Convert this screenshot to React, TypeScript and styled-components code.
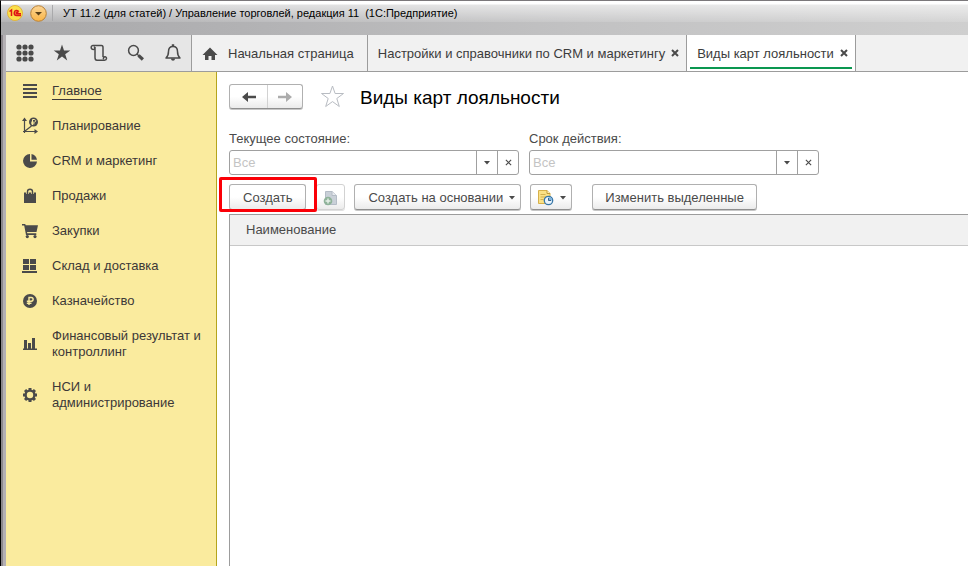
import React from "react";
import styled, { createGlobalStyle, css } from "styled-components";

const ink = "#4a4a4a";

const GlobalStyle = createGlobalStyle`
  *, *::before, *::after { box-sizing: border-box; }
  body {
    margin: 0;
    background: #fff;
    color: ${ink};
    font-family: "Liberation Sans", Arial, sans-serif;
    font-size: 13px;
    line-height: 16px;
  }
  button, input { font: inherit; color: inherit; }
  button { margin: 0; padding: 0; border: 0; background: none; }
  svg { display: block; flex: none; }
`;

const Window = styled.div`
  display: flex;
  flex-direction: column;
  min-height: 100vh;
  overflow: hidden;
`;

const TitleBar = styled.header`
  display: flex;
  align-items: flex-start;
  height: 35px;
  padding: 4px 8px 0 6px;
  border-top: 1px solid #7b787b;
  border-left: 1px solid #000;
  background:
    linear-gradient(to bottom, #fff 0, #fff 3px, rgba(255, 255, 255, 0.6) 4px, rgba(255, 255, 255, 0.12) 21px, transparent 21px),
    linear-gradient(to right, #a8a8aa, #b2b2b4 25%, #c2c2c3 60%, #cfcfcf);
`;

const TitleButton = styled.button`
  display: flex;
  & + & { margin-left: 7px; }
`;

const TitleText = styled.h1`
  margin: 0 0 0 5px;
  padding-left: 10px;
  border-left: 1px solid #a9a9ab;
  color: #000;
  font-size: 11px;
  font-weight: 400;
  white-space: pre;
`;

const Frame = styled.div`
  display: flex;
  flex-direction: column;
  flex: 1;
  border-left: 1px solid #000;
  box-shadow: inset 2px 0 0 #8c888c, inset 5px 0 0 #b4b0b4;
  padding-left: 5px;
`;

const TopRow = styled.div`
  display: flex;
  height: 37px;
  border-bottom: 1px solid #9c9c9c;
  background: #f1f1f1;
`;

const Tools = styled.div`
  display: grid;
  grid-template-columns: repeat(5, 37px);
  border-right: 1px solid #9c9c9c;
  background: #e6e6e6;
`;

const ToolButton = styled.button`
  display: flex;
  align-items: center;
  justify-content: center;
`;

const Tabs = styled.nav`
  display: flex;
  flex: 1;
  min-width: 0;
`;

const Tab = styled.div<{ $active?: boolean; $home?: boolean }>`
  display: flex;
  align-items: center;
  gap: 6px;
  padding: 0 ${(p) => (p.$home ? 13 : 7)}px 0 10px;
  border-right: 1px solid #9c9c9c;
  white-space: nowrap;
  ${(p) =>
    p.$active &&
    css`
      background: linear-gradient(#0a9750, #0a9750) 50% calc(100% - 2px) / calc(100% - 6px) 2px no-repeat #fff;
    `}
`;

const TabLink = styled.a`
  display: flex;
  align-items: center;
  gap: 10px;
  padding-top: 1px;
  color: #3c3c3c;
  text-decoration: none;
`;

const CloseButton = styled.button`
  display: flex;
`;

const Body = styled.div`
  display: flex;
  flex: 1;
`;

const Sidebar = styled.nav`
  flex: 0 0 211px;
  padding: 11px 12px 0 16px;
  border-right: 1px solid #b5a51c;
  background: #faeb9e;
`;

const Menu = styled.ul`
  display: flex;
  flex-direction: column;
  gap: 19px;
  margin: 0;
  padding: 0;
  list-style: none;
`;

const MenuLink = styled.a<{ $current?: boolean }>`
  display: flex;
  align-items: center;
  gap: 14px;
  color: #3c3838;
  text-decoration: none;
  span { box-shadow: ${(p) => (p.$current ? "0 1px 0 #3c3838" : "none")}; }
`;

const Content = styled.main`
  display: flex;
  flex-direction: column;
  flex: 1;
  min-width: 0;
  padding: 12px 0 0 12px;
`;

const Heading = styled.div`
  display: flex;
  align-items: flex-start;
  h2 {
    margin: 0 0 0 15px;
    color: #000;
    font-size: 19px;
    font-weight: 400;
    line-height: 28px;
  }
`;

const raised = css`
  border: 1px solid #b0b0b0;
  border-bottom-color: #8f8f8f;
  border-radius: 3px;
  background: linear-gradient(#fff 50%, #ebebeb);
  box-shadow: 0 1px 0 #c6c6c6;
`;

const History = styled.div`
  ${raised}
  display: grid;
  grid-template-columns: 37px 35px;
  height: 25px;
  margin-right: 17px;
`;

const HistoryButton = styled.button`
  display: flex;
  align-items: center;
  justify-content: center;
  & + & { border-left: 1px solid #d2d2d2; }
`;

const IconButton = styled.button`
  display: flex;
`;

const Filters = styled.div`
  display: flex;
  gap: 10px;
  margin-top: 19px;
`;

const Field = styled.div`
  flex: 0 1 290px;
  label { display: block; margin-bottom: 3px; }
`;

const Combo = styled.div`
  display: flex;
  height: 25px;
  border: 1px solid #a0a0a0;
  border-radius: 3px;
  background: #fff;
`;

const ComboInput = styled.input`
  flex: 1;
  min-width: 0;
  padding: 0 3px;
  border: 0;
  outline: 0;
  background: transparent;
  &::placeholder { color: #c4c4c4; opacity: 1; }
`;

const ComboButton = styled.button`
  display: flex;
  align-items: center;
  justify-content: center;
  width: 21px;
  border-left: 1px solid #a0a0a0;
`;

const Commands = styled.div`
  display: flex;
  margin-top: 9px;
`;

const Highlight = styled.div`
  position: relative;
  z-index: 1;
  margin-right: 10px;
  &::after {
    content: "";
    position: absolute;
    inset: -7px -11px -2px -10px;
    border: 3px solid #fb0007;
    border-radius: 2px;
    pointer-events: none;
  }
`;

const CommandButton = styled.button<{ $tight?: boolean; $faded?: boolean }>`
  ${raised}
  display: flex;
  align-items: center;
  gap: 6px;
  height: 26px;
  padding: 1px ${(p) => (p.$tight ? 6 : 13)}px 0;
  white-space: nowrap;
  ${(p) =>
    p.$faded &&
    css`
      border-color: #d2d2d2;
      box-shadow: 0 1px 0 #e0e0e0;
    `}
`;

const SplitButton = styled(CommandButton)`
  padding-right: 5px;
  margin-left: 9px;
  & + & { padding-left: 6px; }
`;

const LastButton = styled(CommandButton)`
  margin-left: 20px;
  padding-left: 12px;
  padding-right: 12px;
`;

const Grid = styled.div`
  flex: 1;
  margin-top: 4px;
  border-top: 1px solid #9c9c9c;
  border-left: 1px solid #9c9c9c;
`;

const Table = styled.table`
  width: 100%;
  border-collapse: separate;
  border-spacing: 0;
  th {
    height: 31px;
    padding: 0 16px;
    border-bottom: 1px solid #c8c8c8;
    background: #f1f1f1;
    font-weight: 400;
    text-align: left;
    vertical-align: middle;
  }
`;

const Caret = () => (
  <svg width="6" height="4" viewBox="0 0 6 4" fill={ink}>
    <path d="M0 0h6L3 3.5z" />
  </svg>
);

const Cross = ({ size, weight }: { size: number; weight: number }) => (
  <svg width={size} height={size} viewBox="0 0 8 8" stroke={ink} strokeWidth={weight} fill="none">
    <path d="M1 1l6 6M7 1L1 7" />
  </svg>
);

const BackArrow = () => (
  <svg width="14" height="12" viewBox="0 0 14 12" fill={ink}>
    <path d="M6 1L0 6l6 5V7.300H14V4.700H6z" />
  </svg>
);

const ForwardArrow = () => (
  <svg width="14" height="12" viewBox="0 0 14 12" fill="#acacac">
    <path d="M8 1L14 6l-6 5V7.300H0V4.700h8z" />
  </svg>
);

const Glyph = ({ children }: { children: React.ReactNode }) => (
  <svg width="20" height="20" viewBox="0 0 20 20" fill="none" aria-hidden="true">
    {children}
  </svg>
);

const GridIcon = () => (
  <Glyph>
    {[4, 10, 16].map((y) => [4, 10, 16].map((x) => <circle key={`${x}-${y}`} cx={x} cy={y} r="2.6" fill={ink} />))}
  </Glyph>
);
const StarIcon = () => (
  <Glyph>
    <path fill={ink} d="M10 1.500l2 6h6.300l-5.100 3.800 2 6.200-5.200-3.900-5.200 3.900 2-6.200L1.700 7.500H8z" />
  </Glyph>
);
const ScrollIcon = () => (
  <Glyph>
    <path
      stroke={ink}
      strokeWidth="1.5"
      d="M4.500 6.500C1.500 6.500 1.500 2.500 4 2.500h8.500c1.200 0 1.500 1 1.500 2v9.500M6 4v10.500c0 2 .8 2.800 2 2.800h7.500c2.600 0 2.600-3.500.5-3.500-1.500 0-2 1.200-1.300 2.400M4.500 6.500C6 6.500 6.300 4 4.800 4"
    />
  </Glyph>
);
const SearchIcon = () => (
  <Glyph>
    <circle cx="7.500" cy="7.500" r="4.900" stroke={ink} strokeWidth="1.5" />
    <path stroke={ink} strokeWidth="1.300" d="M11 11l2 2" />
    <path stroke={ink} strokeWidth="3.200" d="M12.500 12.300l4.400 4.200" />
  </Glyph>
);
const BellIcon = () => (
  <Glyph>
    <path stroke={ink} strokeWidth="1.500" strokeLinejoin="round" d="M3 15h14c-2-1.800-2.500-3-2.500-6.500 0-3-1.500-5-4.500-5s-4.500 2-4.500 5C5.500 12 5 13.200 3 15z" />
    <path fill={ink} d="M8.800 1.300h2.400v2.200H8.800zM8 15.500h4c0 3-4 3-4 0z" />
  </Glyph>
);
const HomeIcon = () => (
  <svg width="16" height="14" viewBox="0 0 16 14" fill={ink}>
    <path d="M8 0.500L0.500 8H3v5h3.500V9h3v4H13V8h2.500z" />
  </svg>
);

const MenuIcon = () => (
  <Glyph>
    <path fill={ink} d="M1 3h14v2H1zM1 7h14v2H1zM1 11h14v2H1zM1 15h14v2H1z" />
  </Glyph>
);
const PlanIcon = () => (
  <Glyph>
    <path stroke={ink} strokeWidth="1.200" d="M2.500 17V3.500M1 15.500h14M3 15l6.500-5" />
    <path fill={ink} d="M0 5l2.500-3.500L5 5zM12.500 13l3.500 2.500-3.500 2.500z" />
    <circle cx="11.500" cy="6" r="4.500" fill={ink} />
    <path stroke="#faeb9e" d="M10.500 9V3.500h1.700c2 0 2 2.700 0 2.700H9M9 7.800h3.500" />
  </Glyph>
);
const PieIcon = () => (
  <Glyph>
    <path fill={ink} d="M8 3a7 7 0 1 0 7 7.500H8z" />
    <path fill={ink} d="M9.500 3a7 7 0 0 1 5.500 5.800H9.500z" />
  </Glyph>
);
const BagIcon = () => (
  <Glyph>
    <path fill={ink} d="M2 6.500h12V17H2z" />
    <path stroke="#faeb9e" strokeWidth="2.600" d="M5.500 8V5.500c0-3 5-3 5 0V8" />
    <path stroke={ink} strokeWidth="1.400" d="M5.500 8V5.500c0-3 5-3 5 0V8" />
  </Glyph>
);
const CartIcon = () => (
  <Glyph>
    <path fill={ink} d="M0 3h3.200l.5 1.300H16L14.500 11H5l.3 1.200h9V14H4L2.200 4.500H0z" />
    <circle cx="5.300" cy="15.600" r="1.600" fill={ink} />
    <circle cx="13" cy="15.600" r="1.600" fill={ink} />
  </Glyph>
);
const StoreIcon = () => (
  <Glyph>
    <path fill={ink} d="M1 3h6v5H1zM8 3h6v5H8zM1 9h6v5H1zM8 9h6v5H8zM0 15h15v2H0z" />
  </Glyph>
);
const RubleIcon = () => (
  <Glyph>
    <circle cx="8" cy="10" r="7" fill={ink} />
    <path stroke="#faeb9e" strokeWidth="1.400" d="M7 14V6.500h2.200c2.600 0 2.600 3.700 0 3.700H4.800M4.800 12.200h4.700" />
  </Glyph>
);
const BarsIcon = () => (
  <Glyph>
    <path fill={ink} d="M2 6h3v8.500H2zM6 9h3v5.500H6zM10 4h3v10.500h-3zM1 14.500h14V16H1z" />
  </Glyph>
);
const GearIcon = () => (
  <Glyph>
    <circle cx="8" cy="10" r="4.400" stroke={ink} strokeWidth="2.400" />
    {[0, 45, 90, 135, 180, 225, 270, 315].map((a) => (
      <path key={a} fill={ink} d="M6.500 5.500V3h3v2.500z" transform={`rotate(${a} 8 10)`} />
    ))}
  </Glyph>
);

const OneCIcon = () => (
  <svg width="16" height="16" viewBox="0 0 16 16">
    <circle cx="8" cy="8" r="7.500" fill="#fbe04a" stroke="#e3b53a" />
    <path d="M2.500 6.500L4.500 5v6M11.800 6.800C10.800 4.700 7.200 5 7.200 8c0 1.800 1 2.500 2.500 2.500H14M11 8.200c-.5-1.500-2-1-1.800 0 .1.500.5.600 1 .6H14" fill="none" stroke="#df1616" strokeWidth="1.500" />
  </svg>
);
const DropIcon = () => (
  <svg width="17" height="17" viewBox="0 0 17 17">
    <defs>
      <linearGradient id="amber" x2="0" y2="1">
        <stop stopColor="#fbd596" />
        <stop offset="1" stopColor="#fbb545" />
      </linearGradient>
    </defs>
    <circle cx="8.500" cy="8.500" r="7.800" fill="url(#amber)" stroke="#b98137" />
    <path d="M5 7h7l-3.500 3.500z" fill="#5a4018" />
  </svg>
);
const CopyIcon = () => (
  <svg width="15" height="16" viewBox="0 0 15 16">
    <path d="M2.500 1.500H9l4.500 4v9h-11z" fill="#c9d0d8" stroke="#b4bcc6" />
    <path d="M9 1.500v4h4.500" fill="#e8ebef" stroke="#b4bcc6" />
    <circle cx="5" cy="11" r="4.300" fill="#8fb39a" />
    <path d="M5 8.500v5M2.500 11h5" stroke="#e6f0e8" strokeWidth="1.400" />
  </svg>
);
const NoteIcon = () => (
  <svg width="17" height="17" viewBox="0 0 17 17">
    <path d="M1.500 1.500H10l3 3v10H1.500z" fill="#fae186" stroke="#d6b04a" />
    <path d="M10 1.500v3h3" fill="#fff3bd" stroke="#c09a38" />
    <path d="M3.500 5.500h5M3.500 8h6M3.500 10.500h3" stroke="#d3b150" />
    <circle cx="11.500" cy="11.500" r="4.200" fill="#e9f4fc" stroke="#3877a8" strokeWidth="1.300" />
    <path d="M11.500 11.500V8a3.500 3.500 0 0 1 3.500 3.500z" fill="#7db2dc" />
    <path d="M11.500 9v2.500h2.500" fill="none" stroke="#34658e" />
  </svg>
);

const sections = [
  { label: "Главное", icon: <MenuIcon />, current: true },
  { label: "Планирование", icon: <PlanIcon /> },
  { label: "CRM и маркетинг", icon: <PieIcon /> },
  { label: "Продажи", icon: <BagIcon /> },
  { label: "Закупки", icon: <CartIcon /> },
  { label: "Склад и доставка", icon: <StoreIcon /> },
  { label: "Казначейство", icon: <RubleIcon /> },
  { label: "Финансовый результат и контроллинг", icon: <BarsIcon /> },
  { label: "НСИ и администрирование", icon: <GearIcon /> },
];

const MenuIconBox = styled.i`
  display: flex;
  align-items: center;
  flex: none;
  width: 16px;
  height: 16px;
`;

const tools = [
  { label: "Меню функций", icon: <GridIcon /> },
  { label: "Избранное", icon: <StarIcon /> },
  { label: "История", icon: <ScrollIcon /> },
  { label: "Поиск", icon: <SearchIcon /> },
  { label: "Оповещения", icon: <BellIcon /> },
];

function ComboField({ id, label }: { id: string; label: string }) {
  return (
    <Field>
      <label htmlFor={id}>{label}</label>
      <Combo>
        <ComboInput id={id} type="text" placeholder="Все" />
        <ComboButton type="button" aria-label="Выбрать"><Caret /></ComboButton>
        <ComboButton type="button" aria-label="Очистить"><Cross size={7} weight={1.3} /></ComboButton>
      </Combo>
    </Field>
  );
}

export default function App() {
  return (
    <Window>
      <GlobalStyle />
      <TitleBar>
        <TitleButton type="button" aria-label="1С"><OneCIcon /></TitleButton>
        <TitleButton type="button" aria-label="Главное меню"><DropIcon /></TitleButton>
        <TitleText>{"УТ 11.2 (для статей) / Управление торговлей, редакция 11  (1С:Предприятие)"}</TitleText>
      </TitleBar>
      <Frame>
        <TopRow>
          <Tools>
            {tools.map((t) => (
              <ToolButton key={t.label} type="button" aria-label={t.label}>{t.icon}</ToolButton>
            ))}
          </Tools>
          <Tabs>
            <Tab $home>
              <TabLink href="#home"><HomeIcon />Начальная страница</TabLink>
            </Tab>
            <Tab>
              <TabLink href="#crm">Настройки и справочники по CRM и маркетингу</TabLink>
              <CloseButton type="button" aria-label="Закрыть"><Cross size={8} weight={2} /></CloseButton>
            </Tab>
            <Tab $active>
              <TabLink href="#cards" aria-current="page">Виды карт лояльности</TabLink>
              <CloseButton type="button" aria-label="Закрыть"><Cross size={8} weight={2} /></CloseButton>
            </Tab>
          </Tabs>
        </TopRow>
        <Body>
          <Sidebar>
            <Menu>
              {sections.map((s) => (
                <li key={s.label}>
                  <MenuLink href="#section" $current={s.current}>
                    <MenuIconBox>{s.icon}</MenuIconBox>
                    <span>{s.label}</span>
                  </MenuLink>
                </li>
              ))}
            </Menu>
          </Sidebar>
          <Content>
            <Heading>
              <History>
                <HistoryButton type="button" aria-label="Назад"><BackArrow /></HistoryButton>
                <HistoryButton type="button" aria-label="Вперед"><ForwardArrow /></HistoryButton>
              </History>
              <IconButton type="button" aria-label="В избранное">
                <svg width="25" height="24" viewBox="0 0 25 24" fill="#fff" stroke="#b8bcc2">
                  <path d="M12.500 2l2.600 7.500H23.500l-6.700 5 2.500 8-6.800-4.900-6.800 4.900 2.500-8-6.700-5H9.900z" />
                </svg>
              </IconButton>
              <h2>Виды карт лояльности</h2>
            </Heading>
            <Filters>
              <ComboField id="state" label="Текущее состояние:" />
              <ComboField id="term" label="Срок действия:" />
            </Filters>
            <Commands>
              <Highlight>
                <CommandButton type="button">Создать</CommandButton>
              </Highlight>
              <CommandButton type="button" $tight $faded aria-label="Скопировать"><CopyIcon /></CommandButton>
              <SplitButton type="button">Создать на основании<Caret /></SplitButton>
              <SplitButton type="button" aria-label="Отчеты"><NoteIcon /><Caret /></SplitButton>
              <LastButton type="button">Изменить выделенные</LastButton>
            </Commands>
            <Grid>
              <Table>
                <thead>
                  <tr><th scope="col">Наименование</th></tr>
                </thead>
              </Table>
            </Grid>
          </Content>
        </Body>
      </Frame>
    </Window>
  );
}
